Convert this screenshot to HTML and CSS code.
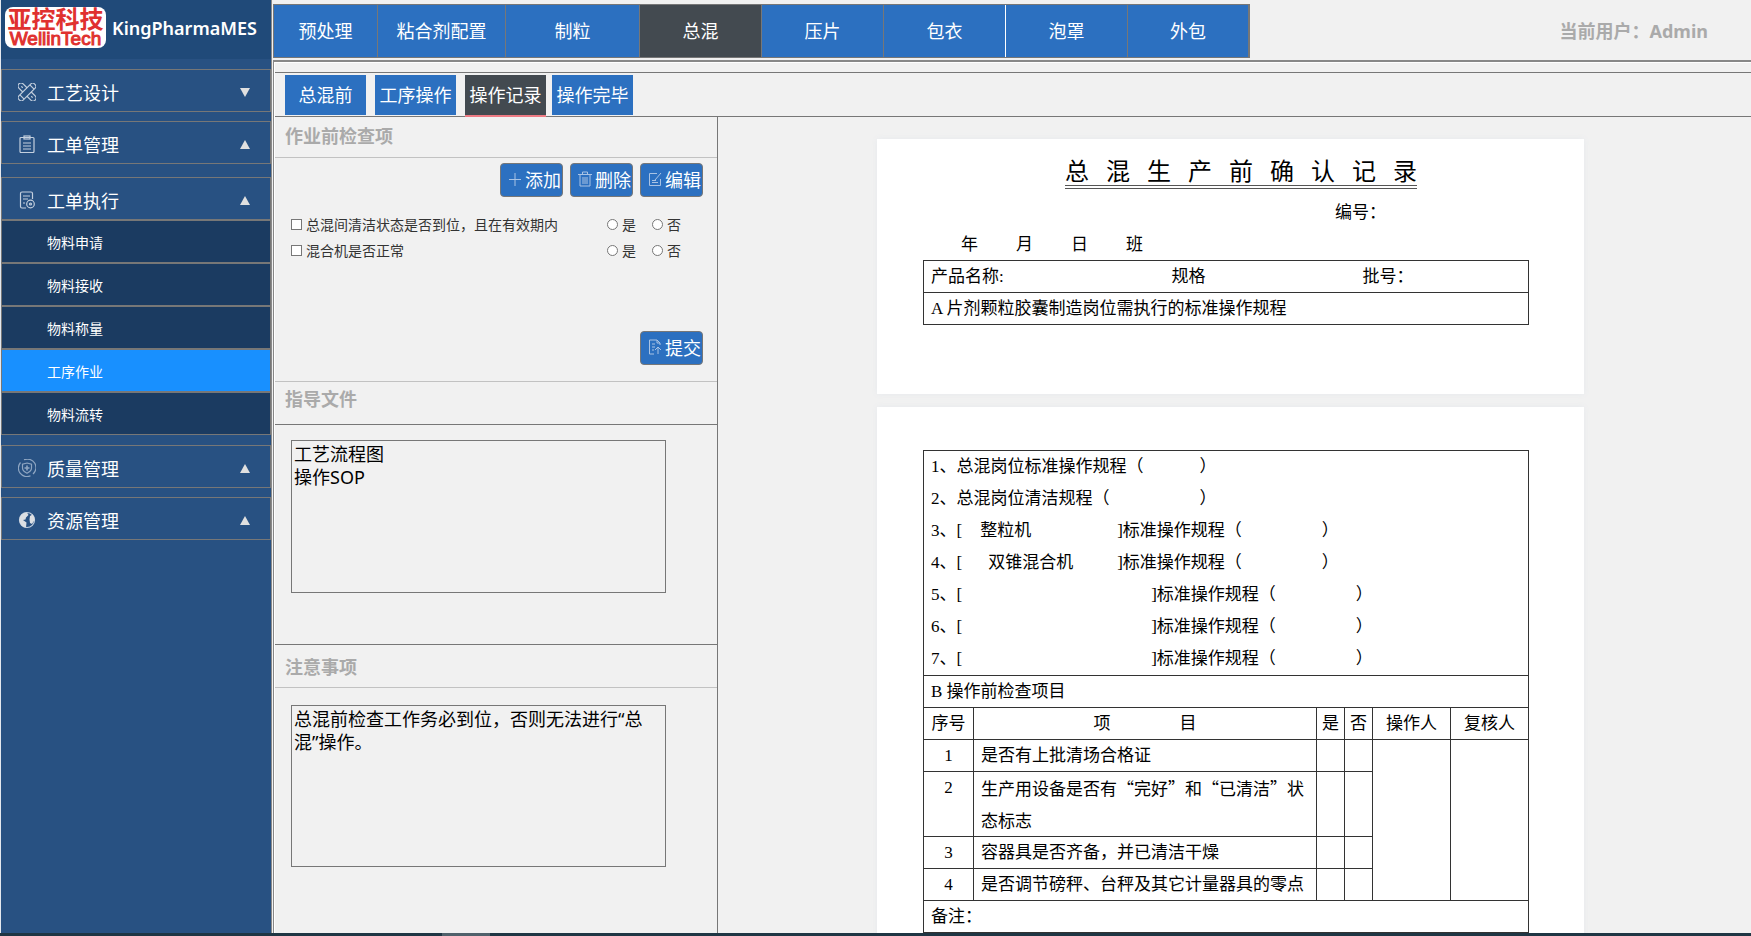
FILE: index.html
```html
<!DOCTYPE html>
<html lang="zh-CN">
<head>
    <meta charset="UTF-8">
    <meta name="viewport" content="width=device-width, initial-scale=1.0">
    <title>KingPharmaMES</title>
    <link rel="stylesheet" href="styles.css">
</head>
<body>
    <div class="app">
        <aside class="sidebar">
            <div class="brand">
                <div class="logo">
                    <span class="logo-cn">亚控科技</span>
                    <span class="logo-en">WellinTech</span>
                </div>
                <span class="brand-name">KingPharmaMES</span>
            </div>
            <nav class="menu">
                <button class="group">
                    <svg class="group-icon" viewBox="0 0 18 18"><g transform="rotate(45 9 9)"><rect x="6" y="-2" width="6" height="22" rx="2.500"/><path d="M6 2h6M6 16h6"/></g><g transform="rotate(-45 9 9)"><path d="M6 6V.500a3 3 0 0 1 6 0V6M6 12v5.500a3 3 0 0 0 6 0V12M9 1v2M9 15v2"/></g></svg>
                    <span>工艺设计</span>
                    <svg class="arrow" viewBox="0 0 10 9"><path d="M0 0h10L5 9z"/></svg>
                </button>
                <button class="group">
                    <svg class="group-icon" viewBox="0 0 18 18"><rect x="2" y="2.500" width="14" height="15" rx="1"/><rect x="6" y="1" width="6" height="3"/><path d="M5 8h8M5 11h8M5 14h8"/></svg>
                    <span>工单管理</span>
                    <svg class="arrow" viewBox="0 0 10 9"><path d="M0 9h10L5 0z"/></svg>
                </button>
                <div class="section">
                    <button class="group">
                        <svg class="group-icon" viewBox="0 0 18 18"><path d="M8 17H4a1.500 1.500 0 0 1-1.500-1.500v-13A1.500 1.500 0 0 1 4 1h9a1.500 1.500 0 0 1 1.500 1.500V8M5 5h7M5 8h5M5 12h2"/><circle cx="12.500" cy="13" r="3.800"/><circle cx="12.500" cy="13" r="1"/></svg>
                        <span>工单执行</span>
                        <svg class="arrow" viewBox="0 0 10 9"><path d="M0 9h10L5 0z"/></svg>
                    </button>
                    <a class="item" href="#">物料申请</a>
                    <a class="item" href="#">物料接收</a>
                    <a class="item" href="#">物料称量</a>
                    <a class="item active" href="#">工序作业</a>
                    <a class="item" href="#">物料流转</a>
                </div>
                <button class="group">
                    <svg class="group-icon faint" viewBox="0 0 18 18"><path d="M6 .800A8.500 8.500 0 0 1 15 15M12.500 16.800A8.500 8.500 0 0 1 2.500 3.500"/><path d="M9 4l4.500 1.200V9c0 2.500-2 4-4.500 5.200C6.500 13 4.500 11.500 4.500 9V5.200z"/><path d="M9 6.500v5M6.500 9h5" stroke-width="1.600"/></svg>
                    <span>质量管理</span>
                    <svg class="arrow" viewBox="0 0 10 9"><path d="M0 9h10L5 0z"/></svg>
                </button>
                <button class="group">
                    <svg class="group-icon" viewBox="0 0 18 18"><circle cx="9" cy="9" r="7.500"/><path class="solid" d="M2 6C3 3 6 1.500 9 1.500L10.500 4 8 6.500 7.500 8.500 5 9l3.500 2.500-.5 5C4 16 1.500 13 1.500 9zM12 5l2.500-1.500C16 5 16.500 7 16.500 9l-2.500 4-2-1-.5-3.500z"/></svg>
                    <span>资源管理</span>
                    <svg class="arrow" viewBox="0 0 10 9"><path d="M0 9h10L5 0z"/></svg>
                </button>
            </nav>
        </aside>

        <main class="main">
            <header class="topbar">
                <nav class="steps">
                    <button class="step short">预处理</button>
                    <button class="step wide">粘合剂配置</button>
                    <button class="step wider">制粒</button>
                    <button class="step active">总混</button>
                    <button class="step">压片</button>
                    <button class="step light">包衣</button>
                    <button class="step">泡罩</button>
                    <button class="step">外包</button>
                </nav>
                <span class="user">当前用户：Admin</span>
            </header>

            <div class="frame">
                <div class="tabs">
                    <button class="tab">总混前</button>
                    <button class="tab">工序操作</button>
                    <button class="tab active">操作记录</button>
                    <button class="tab">操作完毕</button>
                </div>

                <div class="content">
                    <section class="panel">
                        <h2 class="title">作业前检查项</h2>
                        <div class="checks">
                            <div class="tools">
                                <button class="btn"><svg viewBox="0 0 14 16"><path d="M7 2v13M1 8.500h12"/></svg>添加</button>
                                <button class="btn"><svg viewBox="0 0 14 16"><path d="M0 3.500h14M4.500 3V1h5v2M2 4v11h10V4M5 6v7M7 6v7M9 6v7"/></svg>删除</button>
                                <button class="btn"><svg viewBox="0 0 14 16"><path d="M9 2.500H1.500v12h11V8M13 2L7 9M4 11.500h6M4 9.500h4"/></svg>编辑</button>
                            </div>
                            <div class="check-row">
                                <label class="check"><input type="checkbox">总混间清洁状态是否到位，且在有效期内</label>
                                <label class="radio"><input type="radio" name="clean">是</label>
                                <label class="radio"><input type="radio" name="clean">否</label>
                            </div>
                            <div class="check-row">
                                <label class="check"><input type="checkbox">混合机是否正常</label>
                                <label class="radio"><input type="radio" name="mixer">是</label>
                                <label class="radio"><input type="radio" name="mixer">否</label>
                            </div>
                            <div class="submit">
                                <button class="btn"><svg viewBox="0 0 14 16"><path d="M6 15H1.500V1H9l3 3v2M9 1v3h3M4 5h3M4 8h3M4 11h2M10 15V8M7 11l3-3 3 3"/></svg>提交</button>
                            </div>
                        </div>
                        <h2 class="title guide-title"><label for="guide">指导文件</label></h2>
                        <div class="box guide-box">
                            <textarea id="guide" class="guide">工艺流程图
操作SOP</textarea>
                        </div>
                        <h2 class="title notes-title"><label for="notes">注意事项</label></h2>
                        <div class="box">
                            <textarea id="notes" class="notes">总混前检查工作务必到位，否则无法进行“总混”操作。</textarea>
                        </div>
                    </section>

                    <section class="viewer">
                        <article class="page first">
                            <h1 class="doc-title"><span>总</span><span>混</span><span>生</span><span>产</span><span>前</span><span>确</span><span>认</span><span>记</span><span>录</span></h1>
                            <p class="doc-no">编号：</p>
                            <p class="doc-date"><span>年</span><span>月</span><span>日</span><span>班</span></p>
                            <table class="doc-table">
                                <colgroup>
                                    <col class="c-name"><col class="c-spec"><col>
                                </colgroup>
                                <tr>
                                    <td>产品名称:</td>
                                    <td>规格</td>
                                    <td>批号：</td>
                                </tr>
                                <tr>
                                    <td colspan="3">A 片剂颗粒胶囊制造岗位需执行的标准操作规程</td>
                                </tr>
                            </table>
                        </article>

                        <article class="page">
                            <table class="doc-table grid">
                                <colgroup>
                                    <col class="c-no"><col><col class="c-yes"><col class="c-yes"><col class="c-person"><col class="c-person">
                                </colgroup>
                                <tr>
                                    <td colspan="6" class="rules">
                                        <p>1、总混岗位标准操作规程（<i class="gap-s"></i>）</p>
                                        <p>2、总混岗位清洁规程（<i class="gap-l"></i>）</p>
                                        <p>3、[<i class="field">整粒机</i>]标准操作规程（<i class="gap-m"></i>）</p>
                                        <p>4、[<i class="field indent">双锥混合机</i>]标准操作规程（<i class="gap-m"></i>）</p>
                                        <p>5、[<i class="field long"></i>]标准操作规程（<i class="gap-m"></i>）</p>
                                        <p>6、[<i class="field long"></i>]标准操作规程（<i class="gap-m"></i>）</p>
                                        <p>7、[<i class="field long"></i>]标准操作规程（<i class="gap-m"></i>）</p>
                                    </td>
                                </tr>
                                <tr><td colspan="6">B 操作前检查项目</td></tr>
                                <tr>
                                    <th>序号</th>
                                    <th>项<i class="gap-item"></i>目</th>
                                    <th>是</th>
                                    <th>否</th>
                                    <th>操作人</th>
                                    <th>复核人</th>
                                </tr>
                                <tr>
                                    <td class="num">1</td>
                                    <td>是否有上批清场合格证</td>
                                    <td></td>
                                    <td></td>
                                    <td rowspan="4"></td>
                                    <td rowspan="4"></td>
                                </tr>
                                <tr>
                                    <td class="num">2</td>
                                    <td class="quoted">生产用设备是否有“完好”和“已清洁”状态标志</td>
                                    <td></td>
                                    <td></td>
                                </tr>
                                <tr>
                                    <td class="num">3</td>
                                    <td>容器具是否齐备，并已清洁干燥</td>
                                    <td></td>
                                    <td></td>
                                </tr>
                                <tr>
                                    <td class="num">4</td>
                                    <td>是否调节磅秤、台秤及其它计量器具的零点</td>
                                    <td></td>
                                    <td></td>
                                </tr>
                                <tr><td colspan="6" class="remark">备注：</td></tr>
                            </table>
                        </article>
                    </section>
                </div>
            </div>
        </main>
    </div>
    <div class="taskbar"><div class="taskbar-item"></div></div>
</body>
</html>
```

FILE: styles.css
```css
* {
    box-sizing: border-box;
}
body {
    margin: 0;
    height: 100vh;
    display: flex;
    flex-direction: column;
    overflow: hidden;
    background: #f1f1f1;
    font-family: "Noto Sans", "Noto Sans CJK SC", sans-serif;
    font-size: 18px;
    color: #000;
}
button, input, textarea {
    font: inherit;
}
button {
    cursor: pointer;
}
p, h1, h2 {
    margin: 0;
}
.app {
    flex: 1;
    min-height: 0;
    display: flex;
}

/* sidebar */
.sidebar {
    width: 272px;
    flex: none;
    margin-right: 1px;
    border-left: 1px solid #e4e8ee;
    border-right: 1px solid #8a8a8a;
    background: #285182;
}
.brand {
    height: 59px;
    display: flex;
    align-items: center;
    gap: 6px;
    padding: 0 4px 4px;
    background: #204a79;
}
.logo {
    width: 101px;
    height: 41px;
    flex: none;
    display: flex;
    flex-direction: column;
    align-items: center;
    border-radius: 8px;
    background: #fff;
    color: #e0312f;
    white-space: nowrap;
}
.logo-cn {
    font-size: 24px;
    font-weight: bold;
    line-height: 23px;
}
.logo-en {
    font-family: "Liberation Sans", Arial, sans-serif;
    font-size: 19px;
    line-height: 18px;
    -webkit-text-stroke: 1px #e0312f;
}
.brand-name {
    color: #fff;
    font-size: 18px;
    font-weight: 600;
}
.menu {
    display: flex;
    flex-direction: column;
    gap: 9px;
    padding-top: 10px;
}
.section {
    margin-top: 4px;
    padding-bottom: 1px;
}
.group {
    width: 100%;
    height: 43px;
    display: flex;
    align-items: center;
    gap: 11px;
    padding: 3px 20px 0 16px;
    border: 1px solid #777;
    background: transparent;
    color: #fff;
    text-align: left;
}
.group-icon {
    width: 18px;
    height: 18px;
    fill: none;
    stroke: #c3cfde;
    stroke-width: 1.2;
}
.group-icon.faint {
    stroke: #8fa6c2;
}
.group-icon .solid {
    fill: #dcdfe3;
    stroke: none;
}
.arrow {
    width: 10px;
    height: 9px;
    margin-left: auto;
    fill: #e0e0e0;
}
.item {
    height: 43px;
    display: flex;
    align-items: center;
    padding: 1px 0 0 45px;
    border: 1px solid #777;
    background: #1b3b61;
    color: #fff;
    font-size: 14px;
    text-decoration: none;
}
.item.active {
    background: #1890ff;
}

/* top bar */
.main {
    flex: 1;
    min-width: 0;
    display: flex;
    flex-direction: column;
}
.topbar {
    height: 60px;
    flex: none;
    display: flex;
    justify-content: space-between;
    padding-top: 4px;
}
.steps {
    display: flex;
    height: 54px;
    border: 1px solid #777;
    border-right-width: 2px;
}
.step {
    width: 122px;
    padding: 0 0 3px;
    border: 0;
    border-right: 1px solid #777;
    background: #2c70c0;
    color: #fff;
}
.step.short {
    width: 104px;
}
.step.wide {
    width: 128px;
}
.step.wider {
    width: 134px;
}
.step.light {
    border-right-color: #fff;
}
.step:last-child {
    width: 120px;
    border-right: 0;
}
.step.active,
.tab.active {
    background: #434a50;
}
.user {
    align-self: center;
    margin-right: 43px;
    padding-bottom: 5px;
    color: #aaa;
    font-weight: bold;
}
.frame {
    flex: 1;
    min-height: 0;
    display: flex;
    flex-direction: column;
    padding-top: 10px;
    border-top: 2px solid #888;
    border-left: 1px solid #888;
    box-shadow: inset 1px 1px 0 #fff;
}
.tabs {
    height: 45px;
    flex: none;
    display: flex;
    gap: 9px;
    margin-left: 1px;
    padding: 2px 0 0 10px;
    border-top: 1px solid #777;
    border-bottom: 1px solid #777;
}
.tab {
    width: 81px;
    height: 40px;
    padding: 0 0 2px;
    border: 0;
    background: #2c70c0;
    color: #fff;
    white-space: nowrap;
}
.tab.active {
    height: 42px;
    border-bottom: 2px solid #ee7b84;
    margin-right: -3px;
}

/* left panel */
.content {
    flex: 1;
    min-height: 0;
    display: flex;
}
.panel {
    width: 443px;
    flex: none;
    margin-left: 1px;
    border-right: 1px solid #777;
}
.title {
    height: 41px;
    padding-left: 10px;
    border-bottom: 1px solid #c2c2c2;
    color: #aaa;
    font-size: 18px;
    line-height: 39px;
}
.guide-title {
    height: 43px;
    border-color: #777;
    line-height: 34px;
}
.notes-title {
    height: 43px;
    line-height: 45px;
}
.checks {
    height: 224px;
    padding: 5px 14px 0 16px;
    border-bottom: 1px solid #c2c2c2;
}
.tools {
    display: flex;
    justify-content: flex-end;
    gap: 7px;
    margin-bottom: 14px;
}
.btn {
    width: 63px;
    height: 34px;
    display: flex;
    align-items: center;
    justify-content: flex-end;
    gap: 3px;
    padding: 0 1px 2px 0;
    border: 1px solid #777;
    border-radius: 4px;
    background: #2c70c0;
    color: #fff;
    white-space: nowrap;
}
.btn svg {
    width: 14px;
    height: 16px;
    flex: none;
    fill: none;
    stroke: #a9c3e4;
    stroke-width: 1;
}
.check-row {
    height: 26px;
    display: flex;
    align-items: center;
    color: #333;
    font-size: 14px;
}
.check {
    width: 316px;
}
.radio {
    width: 45px;
}
.check, .radio {
    display: flex;
    align-items: center;
    gap: 4px;
}
.check-row input {
    appearance: none;
    width: 11px;
    height: 11px;
    margin: 0;
    border: 1px solid #777;
    background: #fff;
}
.check-row input[type="radio"] {
    border-radius: 50%;
}
.check-row input:checked {
    background: #2c70c0;
}
.submit {
    display: flex;
    justify-content: flex-end;
    padding-top: 68px;
}
.box {
    padding: 15px 0 0 16px;
}
.guide-box {
    height: 220px;
    border-bottom: 1px solid #777;
}
.box textarea {
    width: 375px;
    display: block;
    padding: 2px;
    border: 1px solid #777;
    background: transparent;
    color: #000;
    line-height: 23px;
    resize: none;
    overflow: hidden;
}
.guide {
    height: 153px;
}
.box .notes {
    height: 162px;
    margin-top: 2px;
}

/* document viewer */
.viewer {
    flex: 1;
    min-width: 0;
    display: flex;
    flex-direction: column;
    align-items: center;
    gap: 13px;
    padding: 22px 8px 0 0;
    overflow: hidden;
    font-family: "Liberation Serif", "Noto Sans CJK SC", serif;
    font-size: 17px;
    line-height: 31px;
}
.page {
    width: 707px;
    flex: none;
    padding: 43px 55px 43px 46px;
    background: #fff;
    box-shadow: 0 0 6px #e6e9ed;
}
.page.first {
    height: 255px;
    padding-top: 20px;
}
.doc-title {
    width: fit-content;
    display: flex;
    gap: 17px;
    margin-left: 142px;
    border-bottom: 4px double #555;
    font-size: 24px;
    font-weight: normal;
    line-height: 26px;
}
.doc-no {
    padding: 8px 0 0 412px;
}
.doc-date {
    display: flex;
    gap: 38px;
    padding: 1px 0 0 38px;
}
.doc-table {
    width: 100%;
    border-collapse: collapse;
    table-layout: fixed;
    border: 1px solid #333;
}
.doc-table tr {
    border: 1px solid #333;
}
.doc-table td, .doc-table th {
    height: 32px;
    padding: 0 7px;
    font-weight: normal;
    vertical-align: top;
}
.c-name {
    width: 241px;
}
.c-spec {
    width: 191px;
}
.grid td, .grid th {
    border: 1px solid #333;
}
.doc-table th {
    padding: 0;
}
.c-no {
    width: 50px;
}
.c-yes {
    width: 28px;
}
.c-person {
    width: 78px;
}
.num {
    text-align: center;
}
.quoted {
    font-family: "Noto Sans CJK SC", sans-serif;
}
.rules p, .quoted {
    line-height: 32px;
}
.doc-table i {
    display: inline-block;
    font-style: normal;
}
.gap-s {
    width: 56px;
}
.gap-m {
    width: 80px;
}
.gap-l {
    width: 90px;
}
.gap-item {
    width: 69px;
}
.field {
    width: 155px;
    padding-left: 18px;
}
.field.indent {
    padding-left: 26px;
}
.field.long {
    width: 189px;
}

/* strip at the bottom of the window */
.taskbar {
    height: 3px;
    flex: none;
    padding-left: 442px;
    background: #1f3644;
}
.taskbar-item {
    width: 48px;
    height: 3px;
    background: #50616b;
}
```
